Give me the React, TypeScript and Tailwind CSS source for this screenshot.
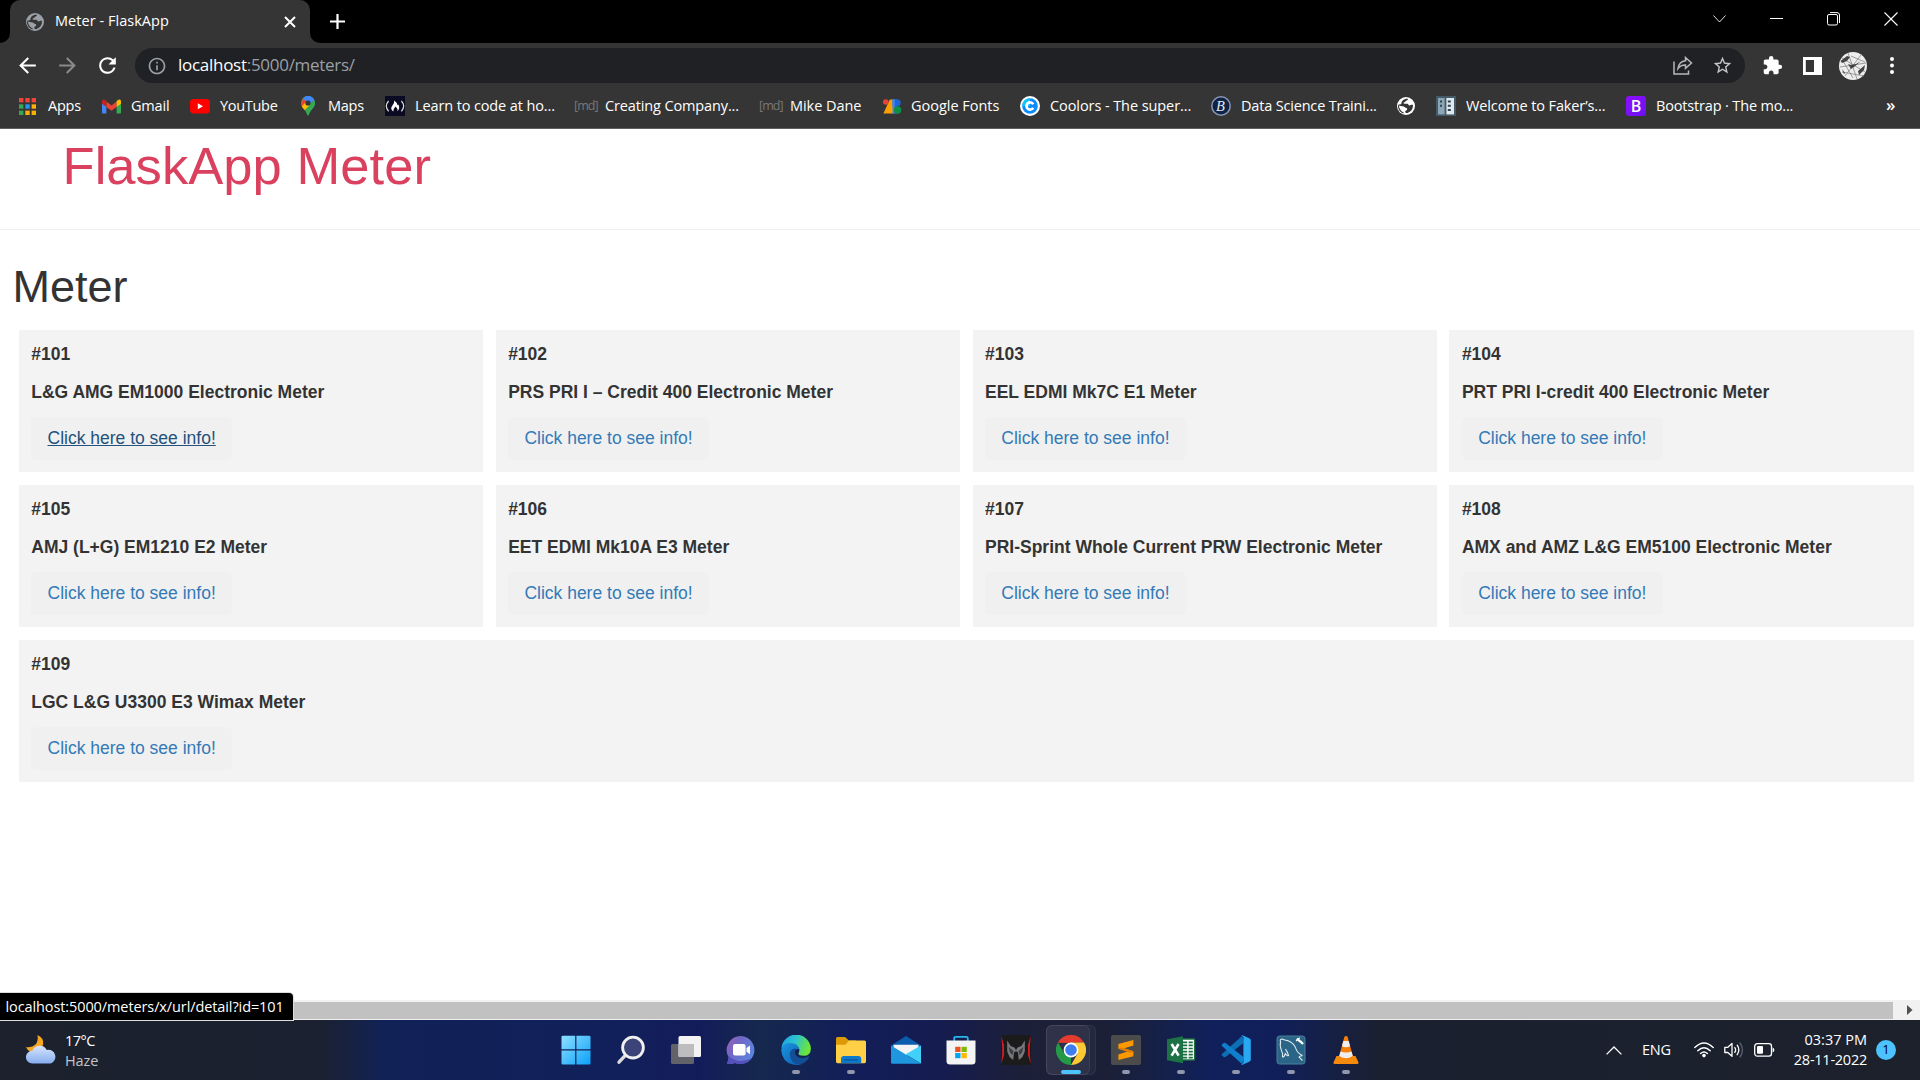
import React from "react";
import { MdExtension, MdStarOutline, MdInfoOutline, MdRefresh, MdArrowBack, MdArrowForward } from "react-icons/md";

const ui = "font-['Open_Sans','Noto_Sans',sans-serif]";

function Globe({ fg, bg }: { fg: string; bg: string }) {
  return (
    <svg width="18" height="18" viewBox="0 0 18 18">
      <circle cx="9" cy="9" r="9" fill={fg} />
      <path
        d="M10 1.6C11.6 2 11 3.3 9.8 3.4C8.4 3.5 8.7 5 7.4 5.2C6 5.3 6.2 6.8 7.6 6.8H10.4C11.5 6.9 11.2 8.4 12.4 8.5C13.6 8.4 13.9 7.6 15.9 7.8C16.3 11 14.5 14.9 10.6 15.9C8.8 16.2 7.9 15.4 8.3 14.2C8.7 13.2 10.1 13.5 10.2 12.2C10.3 10.8 8.7 11 7.9 10.3C6.6 9 4.3 9.3 1.9 8.6C2 11.8 4 14.6 7 15.8L6.4 16.5C3 15.2 .9 12 1 8.7L1.8 7.2C3.3 7.6 4.5 7.5 4.5 5.8C4.5 4 6.4 2.5 10 1.6Z"
        fill={bg}
      />
    </svg>
  );
}

const AppsIcon = () => (
  <svg width="17" height="17" viewBox="0 0 17 17">
    {["#f44336", "#f44336", "#f44336", "#34a853", "#2196f3", "#fbb004", "#34a853", "#fbb004", "#fbb004"].map((c, i) => (
      <rect key={i} x={(i % 3) * 6.3} y={Math.floor(i / 3) * 6.3} width="4.4" height="4.4" fill={c} />
    ))}
  </svg>
);
const GmailIcon = () => (
  <svg className="ml-px" width="19" height="15" viewBox="0 0 19 15">
    <path d="M0 3V13.4Q0 14.6 1.2 14.6H4.4V6.4Z" fill="#4285f4" />
    <path d="M19 3V13.4Q19 14.6 17.8 14.6H14.6V6.4Z" fill="#34a853" />
    <path d="M4.4 2.6V8L9.5 11.8L14.6 8V2.6L9.5 6.4Z" fill="#ea4335" />
    <path d="M0 2.4V4.8L4.4 8V2.6L3.2 1Q0-.6 0 2.4Z" fill="#c5221f" />
    <path d="M19 2.4V4.8L14.6 8V2.6L15.8 1Q19-.6 19 2.4Z" fill="#fbbc04" />
  </svg>
);
const YouTubeIcon = () => (
  <svg width="20" height="15" viewBox="0 0 20 15">
    <rect width="20" height="14.4" rx="3.6" fill="#f00" />
    <path d="M7.8 4.2V10.2L13 7.2Z" fill="#fff" />
  </svg>
);
const MapsIcon = () => (
  <svg width="14" height="20" viewBox="0 0 14 20">
    <defs>
      <clipPath id="pin">
        <path d="M7 0A7 7 0 0 1 14 7C14 12 9.2 13.5 7.7 18.8Q7 20.4 6.3 18.8C4.8 13.5 0 12 0 7A7 7 0 0 1 7 0Z" />
      </clipPath>
    </defs>
    <g clipPath="url(#pin)">
      <rect width="14" height="20" fill="#34a853" />
      <path d="M0 0H14V4L9 7H7L1.6 2.5Z" fill="#4285f4" />
      <path d="M1.6 2.5L7 7L0 15Z" fill="#ea4335" />
      <path d="M0 11L5 6L9 9L2.6 15Z" fill="#fbbc04" />
      <path d="M14 4L9.3 9L3 20H14Z" fill="#34a853" />
      <path d="M4 0H12L13 4L8 8Z" fill="#4285f4" />
    </g>
    <circle cx="7" cy="7" r="2.6" fill="#353535" />
  </svg>
);
const FccIcon = () => (
  <svg width="20" height="20" viewBox="0 0 20 20">
    <rect width="20" height="20" fill="#0a0a23" />
    <path d="M3.6 5Q-1 10 3.6 15.4M16.4 5Q21 10 16.4 15.4" fill="none" stroke="#ddd" strokeWidth="1.2" />
    <path d="M9.2 4.4Q12.6 7 12.6 9.3L13.4 8.6Q15.4 12.6 12.4 15.2Q12.8 12 10.6 10.4Q7.8 13 8.4 15.4Q4.6 13 7.4 9.4Q9.6 7 9.2 4.4Z" fill="#fff" />
  </svg>
);
const MdIcon = () => <span className="block w-[21px] whitespace-nowrap text-[12.5px] leading-none tracking-[-0.9px] text-[#777]">[md]</span>;
const FontsIcon = () => (
  <svg className="ml-px" width="19" height="15" viewBox="0 0 19 15">
    <path d="M6.8 .6H10.5V14.6H.4Z" fill="#f9a000" />
    <circle cx="2.8" cy="3" r="2.8" fill="#ea4335" />
    <path d="M9.5 .3H14.2A3.5 3.5 0 0 1 14.2 7.3H9.5Z" fill="#1a66d8" />
    <path d="M9.5 .3H11.8V14.6H9.5Z" fill="#4285f4" />
    <path d="M11.8 7.3H14.4V14.6H11.8Z" fill="#2f7df0" />
    <circle cx="14.6" cy="11" r="3.7" fill="#0d8f45" />
  </svg>
);
const CoolorsIcon = () => (
  <svg width="20" height="20" viewBox="0 0 20 20">
    <circle cx="10" cy="10" r="10" fill="#fff" />
    <circle cx="10" cy="10" r="7.8" fill="#0a8cff" />
    <path d="M2.2 10A7.8 7.8 0 0 1 10 2.2V10Z" fill="#12c5f8" />
    <path d="M13.2 8.2A3.6 3.6 0 1 0 13.2 11.8" fill="none" stroke="#fff" strokeWidth="2.7" />
  </svg>
);
const BIcon = () => (
  <svg width="20" height="20" viewBox="0 0 20 20">
    <circle cx="10" cy="10" r="9.2" fill="#102347" stroke="#8a98b3" strokeWidth="1.5" />
    <text x="5" y="15" fontSize="14.5" fontStyle="italic" fontFamily="Liberation Serif, serif" fill="#e4e9f2">B</text>
  </svg>
);
const FakerIcon = () => (
  <svg width="20" height="20" viewBox="0 0 20 20">
    <rect width="20" height="20" fill="#455a68" />
    <path d="M2 2H8.6V18.4H2Z" fill="#8da6b5" />
    <path d="M10.4 2H18V18.4H10.4Z" fill="#e1e8ed" />
    <path d="M4 4.4H6V6.4H4ZM4 8.8H6V10.8H4ZM11.8 4.4H14.8V6.4H11.8ZM11.8 8.8H14.8V10.8H11.8ZM11.8 13H14.8V15H11.8Z" fill="#2f4350" />
  </svg>
);
const BootstrapIcon = () => (
  <span className={"flex h-5 w-5 items-center justify-center rounded-[3px] bg-linear-to-br from-[#8d0dfd] to-[#6b10f2] text-[16px] leading-none font-semibold text-white " + ui}>B</span>
);

/* w = icon plus label slot, gap = distance from icon to label */
const bookmarks: { icon: React.ReactNode; label: string; w: string; gap: string; track: string }[] = [
  { icon: <AppsIcon />, label: "Apps", w: "w-[82px]", gap: "gap-[12px]", track: "tracking-[-0.25px]" },
  { icon: <GmailIcon />, label: "Gmail", w: "w-[89px]", gap: "gap-[10px]", track: "tracking-[-0.2px]" },
  { icon: <YouTubeIcon />, label: "YouTube", w: "w-[111px]", gap: "gap-[10px]", track: "tracking-[-0.3px]" },
  { icon: <MapsIcon />, label: "Maps", w: "w-[84px]", gap: "gap-[13px]", track: "tracking-[-0.25px]" },
  { icon: <FccIcon />, label: "Learn to code at ho...", w: "w-[189px]", gap: "gap-[10px]", track: "tracking-[-0.12px]" },
  { icon: <MdIcon />, label: "Creating Company...", w: "w-[185px]", gap: "gap-[10px]", track: "tracking-[-0.13px]" },
  { icon: <MdIcon />, label: "Mike Dane", w: "w-[123px]", gap: "gap-[10px]", track: "tracking-[-0.05px]" },
  { icon: <FontsIcon />, label: "Google Fonts", w: "w-[138px]", gap: "gap-[9px]", track: "tracking-[-0.02px]" },
  { icon: <CoolorsIcon />, label: "Coolors - The super...", w: "w-[191px]", gap: "gap-[10px]", track: "tracking-[-0.08px]" },
  { icon: <BIcon />, label: "Data Science Traini...", w: "w-[186px]", gap: "gap-[10px]", track: "tracking-[-0.18px]" },
  { icon: <Globe fg="#fff" bg="#353535" />, label: "", w: "w-[39px]", gap: "gap-0", track: "" },
  { icon: <FakerIcon />, label: "Welcome to Faker’s...", w: "w-[190px]", gap: "gap-[10px]", track: "tracking-[-0.12px]" },
  { icon: <BootstrapIcon />, label: "Bootstrap · The mo...", w: "w-[260px]", gap: "gap-[10px]", track: "tracking-[-0.16px]" },
];

function Chrome() {
  return (
    <header className={"shrink-0 bg-[#353535] text-white " + ui}>
      <div className="flex h-[43px] bg-black">
        <div className="flex w-[10px] items-end bg-[#353535]">
          <div className="h-full w-full rounded-br-[10px] bg-black" />
        </div>
        <div className="bg-black">
          <div className="flex h-[43px] w-[300px] items-center rounded-t-[10px] bg-[#353535] pl-4">
            <Globe fg="#9aa0a6" bg="#353535" />
            <span className="ml-[11px] flex-1 pb-[2px] text-[14.5px] tracking-[0.04px]">Meter - FlaskApp</span>
            <svg className="mr-[14px]" width="12" height="12" viewBox="0 0 12 12">
              <path d="M1 1L11 11M11 1L1 11" stroke="#fff" strokeWidth="2" />
            </svg>
          </div>
        </div>
        <div className="w-[10px] bg-[#353535]">
          <div className="h-full w-full rounded-bl-[10px] bg-black" />
        </div>
        <svg className="mt-[14px] ml-[10px]" width="15" height="15" viewBox="0 0 15 15">
          <path d="M7.5 0V15M0 7.5H15" stroke="#fff" strokeWidth="2.2" />
        </svg>
        <div className="ml-auto flex items-start pt-[12px] pr-[22px]">
          <svg className="mr-[44px] mt-[3px]" width="13" height="8" viewBox="0 0 13 8"><path d="M.5 .5L6.5 7L12.5 .5" fill="none" stroke="#ddd" strokeWidth="1" /></svg>
          <svg className="mr-[44px]" width="13" height="14" viewBox="0 0 13 14"><path d="M0 6.5H13" stroke="#fff" /></svg>
          <svg className="mr-[44px]" width="13" height="14" viewBox="0 0 13 14"><rect x=".5" y="2.5" width="10" height="10.5" rx="1.5" fill="none" stroke="#fff" /><path d="M3 .6H10Q12.5 .6 12.5 3V11" fill="none" stroke="#fff" /></svg>
          <svg width="14" height="14" viewBox="0 0 14 14"><path d="M.5 .5L13.5 13.5M13.5 .5L.5 13.5" stroke="#fff" strokeWidth="1.1" /></svg>
        </div>
      </div>

      <div className="flex h-[45px] items-center">
        <MdArrowBack className="ml-[15px]" size={25} />
        <MdArrowForward className="ml-[15px] text-[#8a8a8a]" size={25} />
        <MdRefresh className="ml-[15px]" size={25} />
        <div className="ml-[15px] flex h-[35px] w-[1610px] items-center rounded-full bg-[#202124] pl-[12px]">
          <MdInfoOutline className="text-[#9aa0a6]" size={20} />
          <span className="ml-[11px] pb-px text-[17px] tracking-[-0.28px]">
            localhost<span className="text-[#9aa0a6]">:5000/meters/</span>
          </span>
          <svg className="ml-auto mr-[19px]" width="20" height="19" viewBox="0 0 20 19">
            <path d="M1 5.5V18H15.5V14.5" fill="none" stroke="#b4b7ba" strokeWidth="1.5" />
            <path d="M12.5 1.5L18.5 7L12.5 12.3V9Q8 8.8 5 12.6Q6 5.5 12.5 4.8Z" fill="none" stroke="#b4b7ba" strokeWidth="1.5" />
          </svg>
          <MdStarOutline className="mr-[12px] text-[#c4c7c9]" size={21} />
        </div>
        <MdExtension className="ml-[17px]" size={21} />
        <svg className="ml-[20px]" width="19" height="18" viewBox="0 0 19 18">
          <path fillRule="evenodd" d="M0 0H19V18H0ZM2.8 3H11V15H2.8Z" fill="#fff" />
        </svg>
        <svg className="ml-[17px]" width="28" height="28" viewBox="0 0 28 28">
          <circle cx="14" cy="14" r="14" fill="#ededed" />
          <g fill="none" stroke="#777" strokeWidth=".7">
            <path d="M3 6L26 20M6 24L22 3M1 15L27 11M9 1L18 27M3 20L25 24M12 4L26 10M4 9L14 26" />
          </g>
          <path d="M1.5 9L8 4L11 5L8 9L3 11ZM9 12L12 13L17 12L22 9L15 15L12 17ZM19 19L26 13L25 18L20 23ZM3 17L6 21L5 22Z" fill="#444" />
        </svg>
        <svg className="ml-[23px]" width="4" height="17" viewBox="0 0 4 17">
          <circle cx="2" cy="2" r="2" fill="#fff" /><circle cx="2" cy="8.5" r="2" fill="#fff" /><circle cx="2" cy="15" r="2" fill="#fff" />
        </svg>
      </div>

      <nav className="flex h-[41px] items-center border-b border-[#5f5f5f] pb-[4px] pl-[19px] text-[14.5px]">
        {bookmarks.map((b, i) => (
          <div key={i} className={"flex shrink-0 items-center whitespace-nowrap " + b.w + " " + b.gap}>
            <span className="shrink-0">{b.icon}</span>
            <span className={b.track}>{b.label}</span>
          </div>
        ))}
        <span className="pb-[3px] text-[17px] font-semibold">»</span>
      </nav>
    </header>
  );
}

const meters: [string, string][] = [
  ["#101", "L&G AMG EM1000 Electronic Meter"],
  ["#102", "PRS PRI I – Credit 400 Electronic Meter"],
  ["#103", "EEL EDMI Mk7C E1 Meter"],
  ["#104", "PRT PRI I-credit 400 Electronic Meter"],
  ["#105", "AMJ (L+G) EM1210 E2 Meter"],
  ["#106", "EET EDMI Mk10A E3 Meter"],
  ["#107", "PRI-Sprint Whole Current PRW Electronic Meter"],
  ["#108", "AMX and AMZ L&G EM5100 Electronic Meter"],
  ["#109", "LGC L&G U3300 E3 Wimax Meter"],
];

function Page() {
  return (
    <main className="flex-1 overflow-hidden bg-white font-['Liberation_Sans',Arial,sans-serif] text-[17.5px] leading-[25px] text-[#333]">
      <div className="h-[101px] border-b border-[#eee] pt-[8px] pl-[62.5px]">
        <h1 className="text-[52.5px] leading-[58px] tracking-[0.06px] text-[#d9415f]">FlaskApp Meter</h1>
      </div>
      <h1 className="mt-[32px] ml-[12.5px] text-[45px] leading-[50px]">Meter</h1>
      <div className="mt-[17.5px] ml-[18.75px] grid w-[1895px] grid-cols-4 gap-[12.5px]">
        {meters.map(([id, name], i) => (
          <section key={id} className={"flex flex-col items-start gap-[12.5px] bg-[#f3f3f3] p-[12.5px]" + (i === 8 ? " col-span-4" : "")}>
            <p className="font-bold">{id}</p>
            <p className="font-bold whitespace-nowrap">{name}</p>
            <a className={"flex h-[42.5px] items-center rounded-[5px] bg-[#f0f0f0] px-[16.25px] whitespace-nowrap " + (i === 0 ? "text-[#23527c] underline" : "text-[#337ab7]")}>
              Click here to see info!
            </a>
          </section>
        ))}
      </div>
    </main>
  );
}

const Start = () => (
  <svg width="30" height="30" viewBox="0 0 30 30">
    <defs><linearGradient id="st" x1="0" y1="0" x2="1" y2="1"><stop offset="0" stopColor="#8fe0ff" /><stop offset="1" stopColor="#0aa0fa" /></linearGradient></defs>
    <path d="M.5 2Q.5 .8 2 .8H14.2V14.3H.5ZM15.4 .8H28.2Q29.5 .8 29.5 2V14.3H15.4ZM.5 15.5H14.2V29.6H2Q.5 29.6 .5 28.2ZM15.4 15.5H29.5V28.2Q29.5 29.6 28.2 29.6H15.4Z" fill="url(#st)" />
  </svg>
);
const Search = () => (
  <svg width="30" height="30" viewBox="0 0 30 30">
    <path d="M9.8 19.8L3 27.2" stroke="#dcdcdc" strokeWidth="3.4" strokeLinecap="round" />
    <circle cx="17" cy="12.6" r="10.4" fill="#3b4379" stroke="#f0f0f0" strokeWidth="2.8" />
  </svg>
);
const TaskView = () => (
  <svg width="30" height="30" viewBox="0 0 30 30">
    <rect y="9" width="23" height="20" rx="1.5" fill="#62626a" />
    <rect x="7.5" y="1" width="22.5" height="21" rx="1.5" fill="#f3f3f3" />
    <path d="M7.5 9H23V22H9Q7.5 22 7.5 20.5Z" fill="#bdbdc0" />
  </svg>
);
const Chat = () => (
  <svg width="30" height="30" viewBox="0 0 30 30">
    <defs><linearGradient id="ch" x1="0" y1="0" x2="1" y2=".6"><stop offset="0" stopColor="#a062a8" /><stop offset=".4" stopColor="#7266c8" /><stop offset="1" stopColor="#5b86dd" /></linearGradient></defs>
    <path d="M15 1A14 14 0 1 1 9 27.9Q5 29.8 1 28.6Q2.6 25.6 2.6 22A14 14 0 0 1 15 1Z" fill="url(#ch)" />
    <path d="M2.6 21Q12 30 26 23A14 14 0 0 1 9 27.9Q5 29.8 1 28.6Q2.6 25.6 2.6 22Z" fill="#5450bd" />
    <rect x="7" y="9" width="12.6" height="11.6" rx="2" fill="#fff" />
    <path d="M20.5 13L24 10.4V19.2L20.5 16.8Z" fill="#fff" />
  </svg>
);
const Edge = () => (
  <svg width="30" height="30" viewBox="0 0 30 30">
    <defs>
      <linearGradient id="e1" x1="0" y1="0" x2="1" y2=".3"><stop offset="0" stopColor="#1b9de2" /><stop offset=".5" stopColor="#2cc3d2" /><stop offset="1" stopColor="#6be43c" /></linearGradient>
      <linearGradient id="e2" x1="0" y1="0" x2="1" y2="1"><stop offset="0" stopColor="#1b97e3" /><stop offset="1" stopColor="#0c5db0" /></linearGradient>
    </defs>
    <path d="M.4 13A14.8 14.8 0 0 1 29.9 13.4Q29.8 20.8 22.6 20.8Q16.2 20.6 17.8 17.8Q20 12.4 14 10Q7 8 .4 13Z" fill="url(#e1)" />
    <path d="M.2 15Q1 8.4 9 8Q17 8 18.3 14Q12 13.6 12 18.5Q12 26 21 29Q17 30.5 12 29.6Q1 27 .2 15Z" fill="url(#e2)" />
    <path d="M13.6 13.6Q8.6 14.6 8.8 19.5Q10 29.6 19 29.3Q25 27.8 28 22.4Q28.2 21 27 21.5Q20 25 15.2 20.8Q12.4 17 15.6 14Z" fill="#124f95" />
  </svg>
);
const Folder = () => (
  <svg width="30" height="30" viewBox="0 0 30 30">
    <path d="M0 3.5Q0 2 1.5 2H9L13 5.5H20V12H0Z" fill="#dc9a08" />
    <path d="M0 9.8H9.5L13 5.5H28.5Q30 5.5 30 7V26.5Q30 28.3 28.5 28.3H1.5Q0 28.3 0 26.5Z" fill="#ffcf45" />
    <path d="M5 28.3V24Q5 21 8 21H22.4Q25.2 21 25.2 24V28.3Z" fill="#0d79cb" />
    <path d="M8.6 24.8H21.4" stroke="#075598" strokeWidth="1.2" strokeLinecap="round" />
  </svg>
);
const Mail = () => (
  <svg width="30" height="30" viewBox="0 0 30 30">
    <path d="M0 10.5L15 1L30 10.5V20H0Z" fill="#0c5dae" />
    <path d="M2.5 9.8H27.5V13L15 21L2.5 13Z" fill="#f4f4f4" />
    <path d="M0 10.5L30 28.8H1.5Q0 28.8 0 27.5Z" fill="#1f97df" />
    <path d="M30 10.5L14.6 19.3L30 28.6Z" fill="#41d0f8" />
  </svg>
);
const Store = () => (
  <svg width="30" height="30" viewBox="0 0 30 30">
    <path d="M8.2 7V3.2Q8.2 1.8 9.6 1.8H20.4Q21.8 1.8 21.8 3.2V7" fill="none" stroke="#27b5ee" strokeWidth="1.8" />
    <path d="M.5 5.5H29.5V26Q29.5 29.5 26 29.5H4Q.5 29.5 .5 26Z" fill="#f4f4f4" />
    <path d="M9.2 11.8H14.5V17H9.2Z" fill="#f04f22" /><path d="M15.5 11.8H20.8V17H15.5Z" fill="#7fba00" />
    <path d="M9.2 18H14.5V23.2H9.2Z" fill="#00a4ef" /><path d="M15.5 18H20.8V23.2H15.5Z" fill="#ffb900" />
  </svg>
);
const Predator = () => (
  <svg width="30" height="30" viewBox="0 0 30 30">
    <rect width="30" height="30" rx="2" fill="#1b1b1b" />
    <path d="M.2 1L3 10V20L.2 29L1.2 19V12ZM29.8 1L27 10V20L29.8 29L28.8 19V12Z" fill="#d81b24" />
    <path d="M6.2 5.6L9.6 11L13.4 12.6L15 15L16.6 12.6L20.4 11L23.8 5.6V16.5L21.4 22L17.8 25L17 17.6L15.8 16.6H14.2L13 17.6L12.2 25L8.6 22L6.2 16.5Z" fill="#77787c" />
    <path d="M7.6 12L12.4 16L11.6 20L9 17.4ZM22.4 12L17.6 16L18.4 20L21 17.4Z" fill="#3c3c3e" />
  </svg>
);
const ChromeLogo = () => (
  <svg width="30" height="30" viewBox="0 0 30 30">
    <path d="M2 7.5A15 15 0 0 1 28 7.5H15Z" fill="#e33b2e" />
    <path d="M2 7.5L8.5 18.8L15 22.5L15 30A15 15 0 0 1 2 7.5Z" fill="#249a47" />
    <path d="M15 7.5H28A15 15 0 0 1 15 30L21.5 18.8Z" fill="#fcc934" />
    <path d="M2 7.5A15 15 0 0 1 6 3L15 8Z" fill="#e33b2e" />
    <circle cx="15" cy="15" r="7.4" fill="#fff" />
    <circle cx="15" cy="15" r="5.8" fill="#3d7df0" />
  </svg>
);
const Sublime = () => (
  <svg width="30" height="30" viewBox="0 0 30 30">
    <rect width="30" height="30" rx="2" fill="#4b4b4b" />
    <path d="M22.4 5V10.4L13.2 13.3L22.4 16.2V21.2L7.4 25V19.6L16.5 16.6L7.4 13.8V9Z" fill="#ff9800" />
    <path d="M7.4 13.8L10 12.4L22.4 16.2L20 18Z" fill="#df7d00" />
  </svg>
);
const Excel = () => (
  <svg width="30" height="30" viewBox="0 0 30 30">
    <path d="M16 4H28Q28.6 4 28.6 4.8V24Q28.6 25 28 25H16Z" fill="#fff" stroke="#1d6f42" strokeWidth="1.4" />
    <path d="M17 7.3H21.2M22.6 7.3H26.8M17 10.4H21.2M22.6 10.4H26.8M17 13.5H21.2M22.6 13.5H26.8M17 16.6H21.2M22.6 16.6H26.8M17 19.7H21.2M22.6 19.7H26.8M17 22.6H21.2M22.6 22.6H26.8" stroke="#1d6f42" strokeWidth="1.7" />
    <path d="M1 4.2L17 1.2V28.2L1 25.2Z" fill="#1d7245" />
    <path d="M5.6 9L12.6 20.6M12.6 9L5.6 20.6" stroke="#fff" strokeWidth="2.6" />
  </svg>
);
const VsCode = () => (
  <svg width="30" height="30" viewBox="0 0 30 30">
    <path d="M21.5 .4L22.5 8L4.5 22L3 22.2L1 20.6Q.2 19.8 1 19Z" fill="#0d6fb5" />
    <path d="M21.5 29.6L22.5 22L4.5 8L3 7.8L1 9.4Q.2 10.2 1 11Z" fill="#0f7fcb" />
    <path d="M21.5 .3L28.7 3.6Q29.8 4.2 29.8 5.2V24.8Q29.8 25.8 28.7 26.4L21.5 29.7Q20.6 30 20 29.2Q22.4 29.6 22.4 27.6V2.4Q22.4 .4 20 .8Q20.6 0 21.5 .3Z" fill="#29a8f2" />
  </svg>
);
const MySql = () => (
  <svg width="30" height="30" viewBox="0 0 30 30">
    <rect x="1" y="1" width="28" height="28" rx="2.5" fill="#2a6486" stroke="#4b819d" />
    <path d="M6.4 22.2Q7.2 18.6 5.3 15Q3.6 10 4.6 7Q3.4 4 6.2 4Q8.5 5.2 11.6 5.6Q18.2 8.2 20.2 14.4Q21.4 18 26.4 20.6Q24.2 20.6 23 22L26.5 25.5M6.4 22.2Q8.5 22 9.3 18.6Q11.4 21.5 12.6 20.6Q11.2 16.4 9.5 14.2" fill="none" stroke="#dce8ee" strokeWidth="1.1" />
    <path d="M21 3.5L24 6.5M24 6L27 9" stroke="#fff" strokeWidth="2.4" />
    <path d="M20 6L23.8 2.8" stroke="#fff" strokeWidth="1.2" />
  </svg>
);
const Vlc = () => (
  <svg width="30" height="30" viewBox="0 0 30 30">
    <path d="M5.5 21H24.5L27.5 27.5Q27.8 29 26 29H4Q2.2 29 2.5 27.5Z" fill="#f68a0d" />
    <path d="M13.5 1.6Q15 .6 16.5 1.6L22 21.8Q15 26.4 8 21.8Z" fill="#f57f0b" />
    <path d="M12.3 6L17.7 6L19.1 11.3Q15 13 10.9 11.3ZM9.5 16.4Q15 18.6 20.5 16.4L21.8 21Q15 25.4 8.2 21Z" fill="#eeeeee" />
  </svg>
);

const dock: [React.FC, string][] = [
  [Start, ""], [Search, ""], [TaskView, ""], [Chat, ""], [Edge, "dot"], [Folder, "dot"], [Mail, ""], [Store, ""],
  [Predator, ""], [ChromeLogo, "active"], [Sublime, "dot"], [Excel, "dot"], [VsCode, "dot"], [MySql, "dot"], [Vlc, "dot"],
];

function Taskbar() {
  return (
    <footer className={"flex h-[60px] shrink-0 bg-[linear-gradient(90deg,#1c212d_0px,#1b2130_320px,#112257_385px,#11205a_620px,#131c5a_700px,#15284d_760px,#121e59_850px,#151c50_940px,#1c1f38_1020px,#1b2038_1110px,#10205a_1210px,#101f59_1280px,#1b2030_1380px,#1c212c_1920px)] text-white " + ui}>
      <div className="flex w-[548px] items-start pl-[26px]">
        <svg className="mt-[15px]" width="30" height="30" viewBox="0 0 30 30">
          <defs><linearGradient id="cl" x1="0" y1="0" x2="0" y2="1"><stop offset="0" stopColor="#d7e6fb" /><stop offset="1" stopColor="#86adf0" /></linearGradient></defs>
          <path d="M11.5 0Q18 3 17.2 9.2Q15 16.5 7 17Q2 17 0 12Q6 13 9.5 9.6Q12.6 6 11.5 0Z" fill="#f5a623" />
          <path d="M6.5 28.6A6.4 6.4 0 0 1 6.2 15.8A8 8 0 0 1 20.8 15A6.8 6.8 0 0 1 24 28.6Z" fill="url(#cl)" />
        </svg>
        <div className="mt-[11px] ml-[9px] text-[14.5px] leading-5 tracking-[-0.55px]">
          <div>17°C</div>
          <div className="tracking-[-0.1px] text-[#c3c5c9]">Haze</div>
        </div>
      </div>
      <div className="flex">
        {dock.map(([Icon, state], i) => (
          <div key={i} className="flex w-[55px] justify-center">
            {state === "active" ? (
              <div className="mt-[5px] flex h-[50px] w-[50px] rounded-md border border-white/5 bg-white/4">
                <div className="-my-px -ml-px flex w-[44px] shrink-0 flex-col items-end rounded-md border border-white/6 bg-white/5 pt-[9px] pr-[3px]">
                  <Icon />
                  <span className="mt-[5px] mr-[5px] h-1 w-5 shrink-0 rounded-full bg-[#4cc2ff]" />
                </div>
              </div>
            ) : (
              <div className="mt-[5px] flex h-[50px] w-[50px] flex-col items-center pt-[10px]">
                <Icon />
                {state === "dot" && <span className="mt-[5px] h-1 w-2 rounded-full bg-[#9096ab]" />}
              </div>
            )}
          </div>
        ))}
      </div>
      <div className="ml-auto flex items-center pr-[24px]">
        <svg width="16" height="9" viewBox="0 0 16 9"><path d="M.6 8.4L8 1L15.4 8.4" fill="none" stroke="#fff" strokeWidth="1.3" /></svg>
        <span className="ml-[20px] w-[29px] text-[14.5px] tracking-[-0.2px]">ENG</span>
        <svg className="ml-[23px]" width="20" height="16" viewBox="0 0 20 16">
          <g fill="none" stroke="#fff" strokeWidth="1.4" strokeLinecap="round"><path d="M.8 5.6Q10-3.6 19.2 5.6M3.8 8.8Q10 2.6 16.2 8.8M6.6 11.6Q10 8.4 13.4 11.6" /></g>
          <circle cx="10" cy="13.6" r="1.8" fill="#fff" />
        </svg>
        <svg className="ml-[10px]" width="20" height="18" viewBox="0 0 20 18">
          <g fill="none" stroke="#fff" strokeWidth="1.3" strokeLinecap="round" strokeLinejoin="round"><path d="M.8 6.3V11.5H3.8L8 15.3V2.5L3.8 6.3ZM10.8 6.5Q12.5 9 10.8 11.4M13.2 4.2Q16.5 9 13.2 13.7" /><path d="M16 2Q21 9 16 16" stroke="#596070" /></g>
        </svg>
        <svg className="ml-[10px]" width="21" height="14" viewBox="0 0 21 14">
          <rect x=".7" y=".7" width="16.8" height="12.4" rx="2.6" fill="none" stroke="#fff" strokeWidth="1.3" />
          <rect x="3" y="3" width="6" height="7.8" rx="1" fill="#fff" /><path d="M18.6 4.4Q20.4 5 20.4 6.9T18.6 9.4Z" fill="#fff" />
        </svg>
        <div className="ml-[12px] w-[80px] text-right text-[14.5px] leading-5 tracking-[-0.25px] whitespace-nowrap">
          <div className="tracking-normal">03:37 PM</div>
          <div>28-11-2022</div>
        </div>
        <span className="ml-[9px] flex h-5 w-5 items-center justify-center rounded-full bg-[#4cc2ff] text-[13px] text-black">1</span>
      </div>
    </footer>
  );
}

export default function App() {
  return (
    <div className="flex h-[1080px] w-[1920px] flex-col overflow-hidden bg-white">
      <Chrome />
      <Page />
      <div className="relative flex h-[20px] shrink-0 bg-[#f1f1f1] py-[2px] pb-px">
        <div className="h-full w-[1893px] bg-[#c1c1c1]" />
        <svg className="mt-[3px] ml-[14px]" width="6" height="10" viewBox="0 0 6 10"><path d="M0 0L5.5 5L0 10Z" fill="#505050" /></svg>
        <div className={"absolute bottom-0 left-0 flex h-[27px] w-[293px] items-center rounded-tr-[4px] bg-black pt-px pl-[5.5px] text-[14.5px] tracking-[-0.1px] whitespace-nowrap text-white shadow-[0_0_0_1px_#ddd] " + ui}>
          localhost:5000/meters/x/url/detail?id=101
        </div>
      </div>
      <Taskbar />
    </div>
  );
}
